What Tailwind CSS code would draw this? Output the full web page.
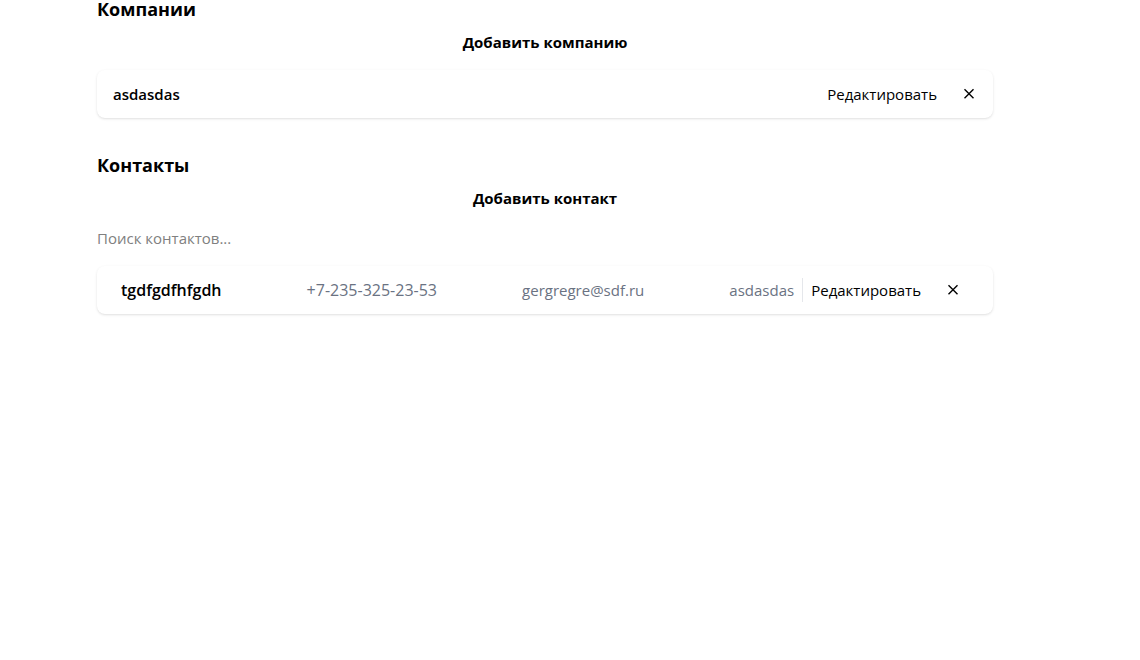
<!DOCTYPE html>
<html lang="ru">
<head>
<meta charset="utf-8">
<title>Компании и контакты</title>
<script src="https://cdn.jsdelivr.net/npm/@tailwindcss/browser@4"></script>
</head>
<body class="bg-white text-black font-['Segoe_UI','Open_Sans',sans-serif] text-[15px] leading-6">
<main class="flex min-h-screen flex-col gap-[38px] pr-[147px] pb-8 pl-[97px]">
  <section>
    <h2 class="text-lg leading-[18px] font-bold">Компании</h2>
    <button class="mt-3 mb-4 block w-full font-bold">Добавить компанию</button>
    <ul>
      <li class="flex items-center justify-between rounded-lg bg-white px-4 py-3 shadow-sm">
        <span class="font-semibold">asdasdas</span>
        <div class="flex items-center">
          <button>Редактировать</button>
          <button aria-label="Удалить" class="ml-6 flex size-4 items-center justify-center"><svg class="size-4" viewBox="0 0 16 16" fill="none" stroke="currentColor" stroke-width="1.4"><path d="M3.5 3.3l9 9M12.5 3.3l-9 9"/></svg></button>
        </div>
      </li>
    </ul>
  </section>
  <section>
    <h2 class="text-lg leading-[18px] font-bold">Контакты</h2>
    <button class="mt-3 block w-full font-bold">Добавить контакт</button>
    <input type="search" aria-label="Поиск контактов" placeholder="Поиск контактов..." class="my-4 block h-6 w-full placeholder:text-[#808080]">
    <ul>
      <li class="flex items-center rounded-lg bg-white px-4 py-3 shadow-sm">
        <div class="flex flex-1 items-center justify-between border-r border-gray-200 px-2 text-gray-500">
          <span class="text-base leading-6 font-semibold text-black">tgdfgdfhfgdh</span>
          <span class="text-base leading-6">+7-235-325-23-53</span>
          <span>gergregre@sdf.ru</span>
          <span>asdasdas</span>
        </div>
        <div class="flex items-center px-2">
          <button>Редактировать</button>
          <button aria-label="Удалить" class="mr-2 ml-6 flex size-4 items-center justify-center"><svg class="size-4" viewBox="0 0 16 16" fill="none" stroke="currentColor" stroke-width="1.4"><path d="M3.5 3.3l9 9M12.5 3.3l-9 9"/></svg></button>
        </div>
      </li>
    </ul>
  </section>
</main>
</body>
</html>
